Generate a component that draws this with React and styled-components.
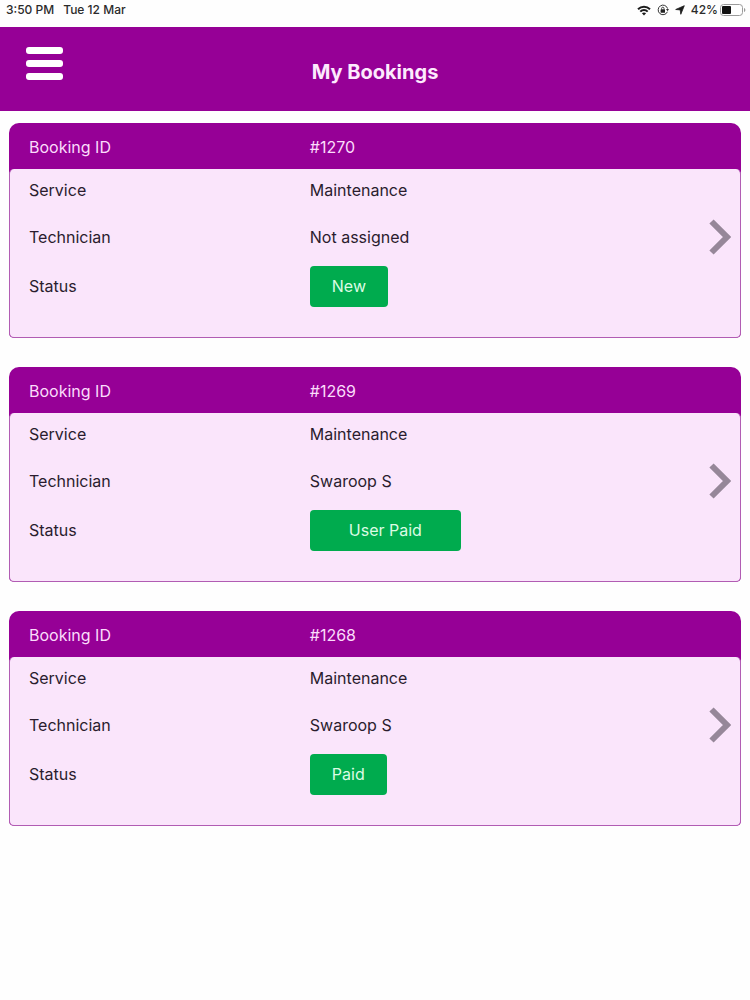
import styled, { createGlobalStyle } from 'styled-components';

const purple = '#960096';

const GlobalStyle = createGlobalStyle`
	* {
		box-sizing: border-box;
	}
	body {
		margin: 0;
		background-color: #fefefe;
		font-family: Inter, "Liberation Sans", sans-serif;
		font-size: 16px;
		line-height: 24px;
		color: #2a1c2e;
	}
	button {
		font: inherit;
		border: none;
		padding: 0;
		cursor: pointer;
	}
`;

const StatusBar = styled.div`
	display: flex;
	justify-content: space-between;
	align-items: center;
	height: 27px;
	padding: 0 4px 7px 6px;
	font-size: 12px;
	line-height: 16px;
	font-weight: 500;
	color: #2b2b2b;
`;

const StatusGroup = styled.div`
	display: flex;
	align-items: center;
	gap: ${p => p.$gap};

	svg {
		display: block;
	}
`;

const Header = styled.header`
	display: grid;
	grid-template-columns: 1fr auto 1fr;
	align-items: start;
	height: 84px;
	padding: 18px 26px;
	background-color: ${purple};
`;

const MenuButton = styled.button`
	display: flex;
	flex-direction: column;
	gap: 6px;
	width: 37px;
	padding-top: 2px;
	background: none;

	span {
		width: 100%;
		height: 7px;
		border-radius: 3px;
		background-color: white;
	}
`;

const Title = styled.h1`
	margin: 0;
	padding-top: 12px;
	font-size: 20px;
	line-height: 30px;
	font-weight: 700;
	color: #fdeafd;
`;

const BookingList = styled.main`
	display: flex;
	flex-direction: column;
	gap: 29px;
	padding: 12px 9px;
`;

const Card = styled.article`
	border-radius: 10px 10px 5px 5px;
	background-color: ${purple};
`;

const Row = styled.div`
	display: flex;
	align-items: center;
`;

const CardHead = styled(Row)`
	height: 46px;
	padding: 2px 10px 0 20px;
	color: #fbdcfb;
`;

const CardBody = styled.div`
	display: grid;
	grid-template-rows: 42px 52px 46px;
	height: 169px;
	padding: 0 9px 0 19px;
	border: 1px solid #b15cb3;
	border-top: none;
	border-radius: 5px;
	background-color: #fae5fb;
`;

const Label = styled.span`
	width: 40%;
`;

const Value = styled.span`
	flex: 1;
`;

const StatusButton = styled.button`
	height: 41px;
	padding: 0 ${p => (p.$wide ? '39px' : '22px')};
	border-radius: 4px;
	background-color: #00ab4e;
	color: #dcfbe4;
`;

const OpenButton = styled.button`
	background: none;

	svg {
		display: block;
	}
`;

const bookings = [
	{ id: '#1270', service: 'Maintenance', technician: 'Not assigned', status: 'New' },
	{ id: '#1269', service: 'Maintenance', technician: 'Swaroop S', status: 'User Paid', wide: true },
	{ id: '#1268', service: 'Maintenance', technician: 'Swaroop S', status: 'Paid' },
];

const WifiIcon = () => (
	<svg width="14" height="11" viewBox="0 0 14 11" fill="none" stroke="#1c1c1c" strokeWidth="2">
		<path d="M1 4.2C4.4 .9 9.6 .9 13 4.2" />
		<path d="M3.3 6.6C5.4 4.6 8.6 4.6 10.7 6.6" />
		<path d="M4.9 8.2C6.1 7.1 7.9 7.1 9.1 8.2L7 10.4Z" fill="#1c1c1c" stroke="none" />
	</svg>
);

const RotationLockIcon = () => (
	<svg width="12" height="12" viewBox="0 0 12 12" fill="none" stroke="#333">
		<path d="M10.4 7.8A4.8 4.8 0 1 1 10.6 4.6" />
		<path d="M9 5L12 5L10.6 7.2Z" fill="#333" stroke="none" />
		<rect x="3.6" y="5.3" width="4.4" height="3.4" rx=".5" fill="#222" stroke="none" />
		<path d="M4.6 5.6V4.4A1.2 1.2 0 0 1 7 4.4V5.6" strokeWidth=".9" />
	</svg>
);

const LocationIcon = () => (
	<svg width="10" height="10" viewBox="0 0 10 10" fill="#1c1c1c" stroke="#1c1c1c" strokeWidth=".8" strokeLinejoin="round">
		<path d="M9.3 .7L5.8 9.3L5.2 4.9L.7 4.5Z" />
	</svg>
);

const BatteryIcon = () => (
	<svg width="26" height="12" viewBox="0 0 26 12">
		<rect x=".5" y=".5" width="22" height="11" rx="3" fill="none" stroke="#9a9a9a" />
		<rect x="2" y="2" width="9" height="8" rx="1" fill="#111" />
		<path d="M24 4C25.8 4.5 25.8 7.5 24 8Z" fill="#9a9a9a" />
	</svg>
);

const ChevronIcon = () => (
	<svg width="22" height="36" viewBox="0 0 22 36" fill="none" stroke="#968799" strokeWidth="6">
		<path d="M2.5 2.5L18 18L2.5 33.5" />
	</svg>
);

const BookingCard = ({ booking }) => {
	return (
		<Card>
			<CardHead>
				<Label>Booking ID</Label>
				<Value>{booking.id}</Value>
			</CardHead>
			<CardBody>
				<Row>
					<Label>Service</Label>
					<Value>{booking.service}</Value>
				</Row>
				<Row>
					<Label>Technician</Label>
					<Value>{booking.technician}</Value>
					<OpenButton aria-label={`Open booking ${booking.id}`}><ChevronIcon /></OpenButton>
				</Row>
				<Row>
					<Label>Status</Label>
					<StatusButton $wide={booking.wide}>{booking.status}</StatusButton>
				</Row>
			</CardBody>
		</Card>
	);
};

export default function App() {
	return (
		<>
			<GlobalStyle />
			<StatusBar>
				<StatusGroup $gap="9px">
					<span>3:50 PM</span>
					<span>Tue 12 Mar</span>
				</StatusGroup>
				<StatusGroup $gap="6px">
					<WifiIcon />
					<RotationLockIcon />
					<LocationIcon />
					<StatusGroup $gap="2px">
						<span>42%</span>
						<BatteryIcon />
					</StatusGroup>
				</StatusGroup>
			</StatusBar>
			<Header>
				<MenuButton aria-label="Menu">
					<span />
					<span />
					<span />
				</MenuButton>
				<Title>My Bookings</Title>
			</Header>
			<BookingList>
				{bookings.map(b => <BookingCard key={b.id} booking={b} />)}
			</BookingList>
		</>
	);
}
